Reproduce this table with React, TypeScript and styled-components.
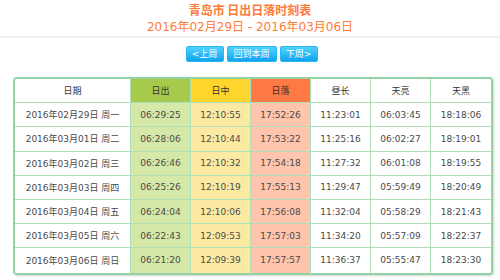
import React from "react";
import styled, { createGlobalStyle } from "styled-components";

const Global = createGlobalStyle`
  html, body { margin: 0; padding: 0; background: #fff; }
  body { font-family: "DejaVu Sans", "Noto Sans CJK SC", sans-serif; }
`;

const Page = styled.div`
  width: 500px;
  height: 280px;
  overflow: hidden;
  background: #fff;
`;

const Head = styled.div`
  display: flex;
  flex-direction: column;
  align-items: center;
  color: #ff7b3a;
  border-bottom: 2px solid #efefef;
  padding-top: 1px;
  height: 38px;
  box-sizing: border-box;
`;

const Title = styled.div`
  font-family: "Noto Sans CJK SC", sans-serif;
  font-size: 12px;
  font-weight: 700;
  line-height: 17px;
`;

const Range = styled.div`
  font-family: "DejaVu Sans", "Noto Sans CJK SC", sans-serif;
  font-size: 12px;
  line-height: 18px;
`;

const Nav = styled.div`
  display: flex;
  justify-content: center;
  gap: 3px;
  padding-top: 8px;
  margin-left: 3px;
`;

const NavButton = styled.button<{ $w: number }>`
  width: ${(p) => p.$w}px;
  height: 16px;
  padding: 0;
  border: 1px solid #29b4f2;
  border-radius: 2px;
  background: linear-gradient(#4fd3ff, #0fa4ef);
  color: #fff;
  font-family: "DejaVu Sans", "Noto Sans CJK SC", sans-serif;
  font-size: 9px;
  line-height: 14px;
`;

const Grid = styled.div`
  margin: 15px 0 0 13px;
  width: 480px;
  box-sizing: border-box;
  border: 2px solid #93d3a3;
  border-radius: 4px;
  box-shadow: 1px 1px 2px rgba(0, 0, 0, 0.18);
  display: grid;
  grid-template-columns: 116px repeat(6, 60px);
  grid-auto-rows: 24.2px;
  overflow: hidden;
`;

type Tone = "plain" | "rise" | "noon" | "set";

const headBg: Record<Tone, string> = {
  plain: "#ffffff",
  rise: "#a7c94c",
  noon: "#fed52d",
  set: "#ff7945",
};
const bodyBg: Record<Tone, string> = {
  plain: "#ffffff",
  rise: "#d5e8a8",
  noon: "#fdeaa2",
  set: "#ffc5ac",
};

const Cell = styled.div<{ $tone: Tone; $head?: boolean; $last?: boolean; $bottom?: boolean }>`
  display: flex;
  align-items: center;
  justify-content: center;
  box-sizing: border-box;
  border-right: ${(p) => (p.$last ? "none" : "1px solid #ade0ba")};
  border-bottom: ${(p) => (p.$bottom ? "none" : "1px solid #ade0ba")};
  background: ${(p) => (p.$head ? headBg[p.$tone] : bodyBg[p.$tone])};
  color: ${(p) => (p.$head ? "#333" : "#4a4a4a")};
  font-size: 9px;
  white-space: nowrap;
`;

const tones: Tone[] = ["plain", "rise", "noon", "set", "plain", "plain", "plain"];
const headers = ["日期", "日出", "日中", "日落", "昼长", "天亮", "天黑"];

const rows = [
  ["2016年02月29日 周一", "06:29:25", "12:10:55", "17:52:26", "11:23:01", "06:03:45", "18:18:06"],
  ["2016年03月01日 周二", "06:28:06", "12:10:44", "17:53:22", "11:25:16", "06:02:27", "18:19:01"],
  ["2016年03月02日 周三", "06:26:46", "12:10:32", "17:54:18", "11:27:32", "06:01:08", "18:19:55"],
  ["2016年03月03日 周四", "06:25:26", "12:10:19", "17:55:13", "11:29:47", "05:59:49", "18:20:49"],
  ["2016年03月04日 周五", "06:24:04", "12:10:06", "17:56:08", "11:32:04", "05:58:29", "18:21:43"],
  ["2016年03月05日 周六", "06:22:43", "12:09:53", "17:57:03", "11:34:20", "05:57:09", "18:22:37"],
  ["2016年03月06日 周日", "06:21:20", "12:09:39", "17:57:57", "11:36:37", "05:55:47", "18:23:30"],
];

export default function App() {
  return (
    <Page>
      <Global />
      <Head>
        <Title>青岛市 日出日落时刻表</Title>
        <Range>2016年02月29日 - 2016年03月06日</Range>
      </Head>
      <Nav>
        <NavButton $w={38}>&lt;上周</NavButton>
        <NavButton $w={50}>回到本周</NavButton>
        <NavButton $w={38}>下周&gt;</NavButton>
      </Nav>
      <Grid>
        {headers.map((h, i) => (
          <Cell key={h} $tone={tones[i]} $head $last={i === 6}>
            {h}
          </Cell>
        ))}
        {rows.map((r, ri) =>
          r.map((v, ci) => (
            <Cell key={`${ri}-${ci}`} $tone={tones[ci]} $last={ci === 6} $bottom={ri === rows.length - 1}>
              {v}
            </Cell>
          ))
        )}
      </Grid>
    </Page>
  );
}
